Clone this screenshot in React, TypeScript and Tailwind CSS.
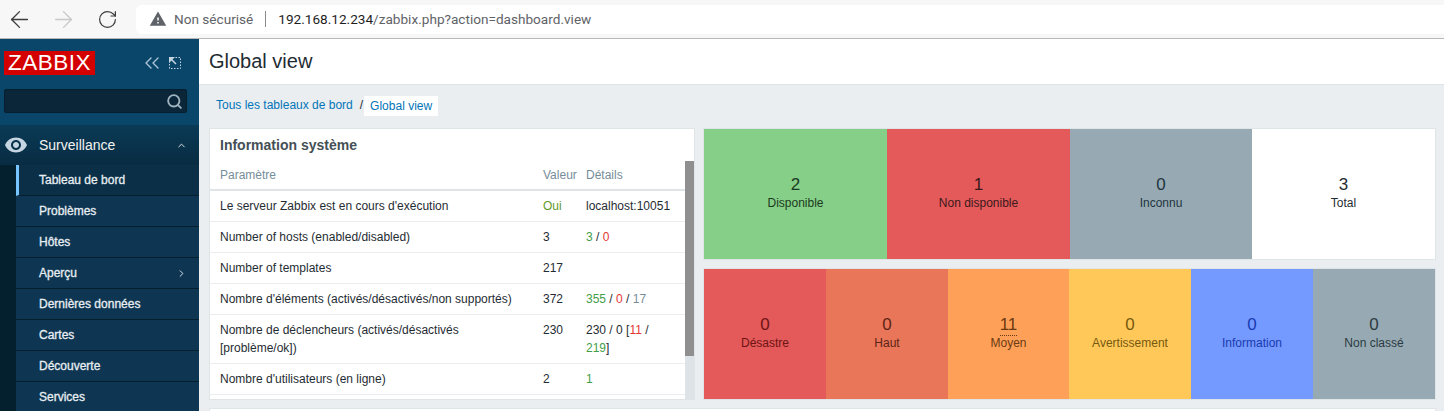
import React from 'react';
import { ArrowLeft, ArrowRight, RotateCw, Search, ChevronUp, ChevronRight, ChevronsLeft } from 'lucide-react';
import { MdVisibility, MdWarning } from 'react-icons/md';

const menuItems = ['Tableau de bord', 'Problèmes', 'Hôtes', 'Aperçu', 'Dernières données', 'Cartes', 'Découverte', 'Services'];

const hostTiles = [
  { value: '2', label: 'Disponible', className: 'w-[183px] bg-[#86cf88] text-[#1c3a20]' },
  { value: '1', label: 'Non disponible', className: 'w-[183px] bg-[#e45959] text-[#3a1a1c]' },
  { value: '0', label: 'Inconnu', className: 'w-[182px] bg-[#97aab3] text-[#1f3440]' },
  { value: '3', label: 'Total', className: 'flex-1 bg-white text-[#1f2c33]' },
];

const severityTiles = [
  { value: '0', label: 'Désastre', className: 'w-[122px] bg-[#e45959] text-[#6e1414]' },
  { value: '0', label: 'Haut', className: 'w-[122px] bg-[#e97659] text-[#5c2416]' },
  { value: '11', label: 'Moyen', className: 'w-[121px] bg-[#ffa059] text-[#6b3a10]', dotted: true },
  { value: '0', label: 'Avertissement', className: 'w-[122px] bg-[#ffc859] text-[#76590f]' },
  { value: '0', label: 'Information', className: 'w-[122px] bg-[#7499ff] text-[#1a3bb0]' },
  { value: '0', label: 'Non classé', className: 'flex-1 bg-[#97aab3] text-[#2b3a42]' },
];

const Tile = ({ value, label, className, dotted }: { value: string; label: string; className: string; dotted?: boolean }) => (
  <div className={`flex h-full flex-col items-center pt-[46px] ${className}`}>
    <span className={`text-[17px] leading-[20px] ${dotted ? 'mb-[-1px] border-b border-dotted border-current' : ''}`}>{value}</span>
    <span className="text-[12px] leading-[16px]">{label}</span>
  </div>
);

const Row = ({ name, value, details, tall }: { name: React.ReactNode; value: React.ReactNode; details?: React.ReactNode; tall?: boolean }) => (
  <div className={`flex border-b border-[#ebeef0] pt-[6px] leading-[18px] ${tall ? 'h-[49px]' : 'h-[31px]'}`}>
    <div className="w-[333px] pl-[10px] pr-[20px]">{name}</div>
    <div className="w-[43px]">{value}</div>
    <div className="flex-1 pr-[12px]">{details}</div>
  </div>
);

export default function App() {
  return (
    <div className="flex h-[411px] w-[1444px] flex-col overflow-hidden bg-[#ebeef0] font-['Liberation_Sans',Arial,sans-serif] text-[12px] text-[#1f2c33]">
      {/* barre du navigateur */}
      <div className="flex h-[39px] shrink-0 items-center border-b border-[#b8b8b8] bg-[#f7f7f7]">
        <ArrowLeft className="ml-[6px] h-[27px] w-[27px] text-[#3c3c3c]" strokeWidth={1.2} />
        <ArrowRight className="ml-[17px] h-[27px] w-[27px] text-[#c8c8c8]" strokeWidth={1.2} />
        <RotateCw className="ml-[20px] h-[21px] w-[21px] text-[#3c3c3c]" strokeWidth={1.4} />
        <div className="ml-[18px] flex h-[29px] flex-1 items-center rounded-l-[6px] bg-white pl-[13px] font-['Roboto',sans-serif] text-[13.6px]">
          <MdWarning className="h-[18px] w-[18px] text-[#5f6368]" />
          <span className="ml-[7px] text-[#5f6368]">Non sécurisé</span>
          <span className="mx-[12px] h-[16px] w-px bg-[#8a8a8a]" />
          <span className="text-[#1f1f1f]">192.168.12.234</span>
          <span className="text-[#5f6368]">/zabbix.php?action=dashboard.view</span>
        </div>
      </div>

      <div className="flex min-h-0 flex-1">
        {/* menu latéral */}
        <aside className="flex w-[199px] shrink-0 flex-col bg-[#04202e]">
          <div className="h-[86px] shrink-0 bg-[#0a466a] px-[4px] pt-[12px]">
            <div className="flex items-center">
              <div className="flex h-[24px] w-[91px] items-center justify-center bg-[#d40000] text-[22.5px] leading-none tracking-[0.5px] text-white">ZABBIX</div>
              <ChevronsLeft className="ml-[45px] h-[24px] w-[24px] text-[#a9c4d6]" strokeWidth={1.4} />
              <svg className="ml-[5px] h-[12px] w-[12px] text-[#c5d6e2]" viewBox="0 0 12 12" fill="none">
                <rect x="0.5" y="0.5" width="11" height="11" stroke="currentColor" strokeDasharray="1.5 1.5" />
                <path d="M0 0h6L0 6z" fill="currentColor" />
                <path d="M2 2l5 5" stroke="currentColor" strokeWidth="1.5" />
              </svg>
            </div>
            <div className="mt-[14px] flex h-[24px] w-[183px] items-center justify-end rounded-[2px] border border-[#04202e] bg-[#0a2638] pr-[3px]">
              <Search className="h-[17px] w-[17px] text-[#a0b4c0]" strokeWidth={2.6} />
            </div>
          </div>
          <div className="flex h-[40px] shrink-0 items-center bg-gradient-to-b from-[#0a3a56] to-[#082c42] pl-[4px] pr-[12px] text-[14px] text-[#f2f2f2]">
            <MdVisibility className="h-[24px] w-[24px] text-[#c5d6e2]" />
            <span className="ml-[11px] flex-1">Surveillance</span>
            <ChevronUp className="h-[11px] w-[11px]" strokeWidth={2} />
          </div>
          <nav className="ml-[16px] flex flex-col">
            {menuItems.map((item, i) => (
              <div
                key={item}
                className={`flex h-[31px] shrink-0 items-center border-b border-[#04202e] pr-[12px] text-[#e8eef2] [-webkit-text-stroke:0.3px] ${
                  i === 0 ? 'border-l-[3px] border-l-[#76c5ff] bg-[#0a2f47] pl-[20px]' : 'bg-[#0e3653] pl-[23px]'
                }`}
              >
                <span className="flex-1">{item}</span>
                {item === 'Aperçu' && <ChevronRight className="h-[11px] w-[11px]" strokeWidth={2} />}
              </div>
            ))}
          </nav>
        </aside>

        {/* contenu */}
        <main className="min-w-0 flex-1">
          <div className="flex h-[46px] items-center border-b border-[#dfe4e7] bg-white pb-[2px] pl-[10px] text-[20px] text-[#1f2c33]">Global view</div>
          <div className="flex h-[43px] items-start pl-[17px] pt-[11px]">
            <span className="text-[#0275b8]">Tous les tableaux de bord</span>
            <span className="ml-[7px]">/</span>
            <span className="ml-[1px] flex h-[20px] items-center bg-white px-[6px] text-[#0275b8]">Global view</span>
          </div>

          <div className="flex gap-[8px] pl-[10px]">
            {/* information système */}
            <section className="relative h-[272px] w-[486px] shrink-0 overflow-hidden border border-[#dfe4e7] bg-white">
              <h4 className="pl-[10px] pt-[7px] text-[14px] leading-[18px] font-bold text-[#444f56]">Information système</h4>
              <div className="mr-[9px] mt-[12px]">
                <div className="flex h-[25px] border-b-[2px] border-[#dfe4e7] leading-[18px] text-[#768d99]">
                  <div className="w-[333px] pl-[10px]">Paramètre</div>
                  <div className="w-[43px]">Valeur</div>
                  <div className="flex-1">Détails</div>
                </div>
                <Row name="Le serveur Zabbix est en cours d'exécution" value={<span className="text-[#5f9a2c]">Oui</span>} details="localhost:10051" />
                <Row name="Number of hosts (enabled/disabled)" value="3" details={<><span className="text-[#429e47]">3</span> / <span className="text-[#e33734]">0</span></>} />
                <Row name="Number of templates" value="217" />
                <Row name="Nombre d'éléments (activés/désactivés/non supportés)" value="372" details={<><span className="text-[#429e47]">355</span> / <span className="text-[#e33734]">0</span> / <span className="text-[#768d99]">17</span></>} />
                <Row tall name="Nombre de déclencheurs (activés/désactivés [problème/ok])" value="230" details={<>230 / 0 [<span className="text-[#e33734]">11</span> / <span className="text-[#429e47]">219</span>]</>} />
                <Row name="Nombre d'utilisateurs (en ligne)" value="2" details={<span className="text-[#429e47]">1</span>} />
              </div>
              {/* barre de défilement */}
              <div className="absolute bottom-0 right-0 top-[32px] w-[9px] bg-[#dde3e6]">
                <div className="h-[195px] bg-[#8f8f8f]" />
              </div>
            </section>

            {/* tuiles */}
            <div className="flex w-[733px] flex-col gap-[8px]">
              <div className="flex h-[132px] border border-[#dfe4e7]">
                {hostTiles.map(t => <Tile key={t.label} {...t} />)}
              </div>
              <div className="flex h-[132px] border border-[#dfe4e7]">
                {severityTiles.map(t => <Tile key={t.label} {...t} />)}
              </div>
            </div>
          </div>
          <div className="ml-[10px] mt-[8px] h-[10px] w-[1227px] border border-[#dfe4e7] bg-white" />
        </main>
      </div>
    </div>
  );
}
